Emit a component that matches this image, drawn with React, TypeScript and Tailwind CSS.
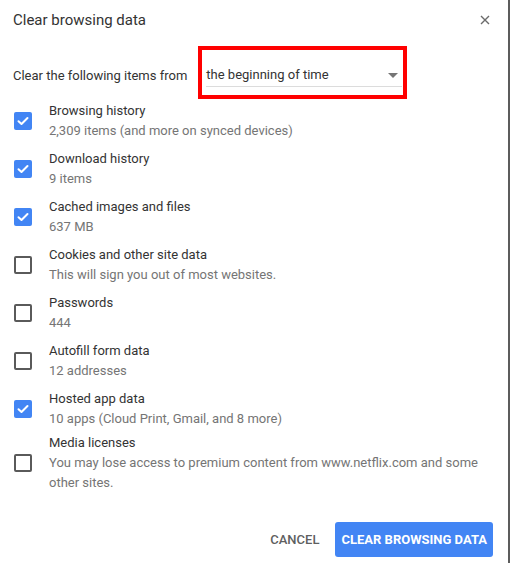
import React from 'react';

type Item = {
  label: string;
  detail: string;
  checked: boolean;
};

const items: Item[] = [
  { label: 'Browsing history', detail: '2,309 items (and more on synced devices)', checked: true },
  { label: 'Download history', detail: '9 items', checked: true },
  { label: 'Cached images and files', detail: '637 MB', checked: true },
  { label: 'Cookies and other site data', detail: 'This will sign you out of most websites.', checked: false },
  { label: 'Passwords', detail: '444', checked: false },
  { label: 'Autofill form data', detail: '12 addresses', checked: false },
  { label: 'Hosted app data', detail: '10 apps (Cloud Print, Gmail, and 8 more)', checked: true },
];

const Checkbox = ({ checked }: { checked: boolean }) => {
  if (checked) {
    return (
      <div className="flex h-[18px] w-[18px] items-center justify-center rounded-[2px] bg-[#4285f4]">
        <svg width="12" height="10" viewBox="0 0 12 10" fill="none">
          <path d="M1.5 5.2 L4.5 8 L10.5 2" stroke="white" strokeWidth="2" strokeLinecap="round" strokeLinejoin="round" />
        </svg>
      </div>
    );
  }
  return <div className="h-[18px] w-[18px] rounded-[2px] border-2 border-[#5a5a5a]" />;
};

const Row = ({ item }: { item: Item }) => (
  <div className="flex items-center">
    <div className="pl-[14px] pr-[17px]">
      <Checkbox checked={item.checked} />
    </div>
    <div className="text-[13px] leading-[20px]">
      <div className="text-[#333333]">{item.label}</div>
      <div className="text-[#757575]">{item.detail}</div>
    </div>
  </div>
);

export default function App() {
  return (
    <div className="flex h-[563px] w-[510px] flex-col border-r-2 border-[#5c5c5c] bg-white font-['Roboto',sans-serif]">
      {/* header */}
      <div className="flex h-[40px] items-center justify-between pl-[13px] pr-[18px]">
        <h1 className="text-[15px] text-[#333333]">Clear browsing data</h1>
        <svg width="10" height="10" viewBox="0 0 10 10">
          <path d="M1 1 L9 9 M9 1 L1 9" stroke="#6b6b6b" strokeWidth="1.4" />
        </svg>
      </div>

      {/* time range */}
      <div className="mt-[6px] flex items-start pl-[13px]">
        <span className="mt-[20px] text-[13px] leading-[20px] text-[#333333]">
          Clear the following items from
        </span>
        <div className="ml-[11px] h-[53px] w-[209px] border-4 border-[#ff0000] pl-[4px] pr-[1px]">
          <div className="flex items-center justify-between border-b border-[#dcdcdc] pb-[2px] pt-[16px]">
            <span className="text-[13px] leading-[18px] text-[#333333]">the beginning of time</span>
            <svg width="10" height="5" viewBox="0 0 10 5" className="mr-[4px]">
              <path d="M0 0 L10 0 L5 5 Z" fill="#757575" />
            </svg>
          </div>
        </div>
      </div>

      {/* items */}
      <div className="mt-[2px] flex flex-col gap-[8px]">
        {items.map((item) => (
          <Row key={item.label} item={item} />
        ))}
      </div>
      <div className="mt-[4px] flex items-center">
        <div className="pl-[14px] pr-[17px]">
          <Checkbox checked={false} />
        </div>
        <div className="text-[13px] leading-[20px]">
          <div className="text-[#333333]">Media licenses</div>
          <div className="w-[440px] leading-[19.5px] text-[#757575]">
            You may lose access to premium content from www.netflix.com and some other sites.
          </div>
        </div>
      </div>

      {/* footer */}
      <div className="mt-[30px] flex items-center justify-end pr-[15px]">
        <button className="mr-[16px] text-[13px] font-medium text-[#5f5f5f]">CANCEL</button>
        <button className="h-[35px] rounded-[3px] bg-[#4285f4] px-[6px] text-[13px] font-bold text-white">
          CLEAR BROWSING DATA
        </button>
      </div>
    </div>
  );
}
